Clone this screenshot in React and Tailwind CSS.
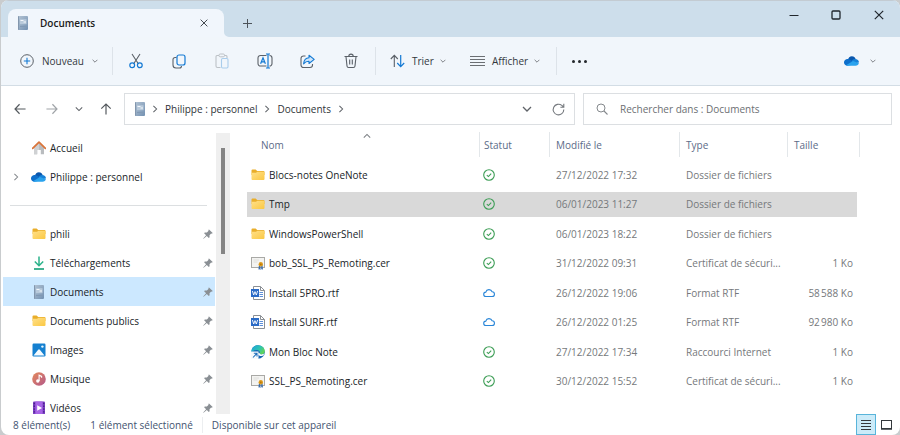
import React from "react";

/* ---------- generic glyphs ---------- */

function Chevron({ dir = "down", size = 8, className = "text-[#5f6368]" }) {
  const paths = {
    down: "M1 3 L5 7 L9 3",
    up: "M1 7 L5 3 L9 7",
    right: "M3 1 L7 5 L3 9",
  };
  return (
    <svg width={size} height={size} viewBox="0 0 10 10" fill="none" className={`shrink-0 ${className}`} aria-hidden="true">
      <path d={paths[dir]} stroke="currentColor" strokeWidth="1.3" />
    </svg>
  );
}

function Arrow({ dir, className }) {
  const paths = {
    left: "M13.5 7 H1.5 M6.5 1.5 L1.2 7 L6.5 12.5",
    right: "M0.5 7 H12.5 M7.5 1.5 L12.8 7 L7.5 12.5",
    up: "M7 13.5 V1.5 M1.5 6.5 L7 1.2 L12.5 6.5",
  };
  return (
    <svg width="12" height="12" viewBox="0 0 14 14" fill="none" className={className} aria-hidden="true">
      <path d={paths[dir]} stroke="currentColor" strokeWidth="1.4" />
    </svg>
  );
}

function CloseGlyph({ size = 8, className }) {
  return (
    <svg width={size} height={size} viewBox="0 0 10 10" fill="none" className={className} aria-hidden="true">
      <path d="M0.8 0.8 L9.2 9.2 M9.2 0.8 L0.8 9.2" stroke="currentColor" strokeWidth="1.2" />
    </svg>
  );
}

/* ---------- toolbar icons ---------- */

function NewIcon() {
  return (
    <svg width="14" height="14" viewBox="0 0 14 14" fill="none" aria-hidden="true">
      <circle cx="7" cy="7" r="6.3" stroke="#5b6168" />
      <path d="M7 3.8 V10.2 M3.8 7 H10.2" stroke="#1379d3" strokeWidth="1.1" />
    </svg>
  );
}

function CutIcon() {
  return (
    <svg width="14" height="16" viewBox="0 0 14 16" fill="none" aria-hidden="true">
      <path d="M3 1 L9.3 10.8 M11 1 L4.7 10.8" stroke="#5b6168" strokeWidth="1.1" />
      <circle cx="3.2" cy="12.3" r="2.4" stroke="#1379d3" strokeWidth="1.2" />
      <circle cx="10.8" cy="12.3" r="2.4" stroke="#1379d3" strokeWidth="1.2" />
    </svg>
  );
}

function CopyIcon() {
  return (
    <svg width="14" height="15" viewBox="0 0 14 15" fill="none" aria-hidden="true">
      <path d="M4.5 3.5 H3 a2 2 0 0 0 -2 2 V11 a3 3 0 0 0 3 3 H7.5 a2 2 0 0 0 2 -2" stroke="#5b6168" strokeWidth="1.1" />
      <rect x="5" y="1" width="8" height="10" rx="2" stroke="#1379d3" strokeWidth="1.2" />
    </svg>
  );
}

function PasteIcon() {
  return (
    <svg width="14" height="16" viewBox="0 0 14 16" fill="none" aria-hidden="true">
      <path d="M4 2.5 H2 a1 1 0 0 0 -1 1 V13 a1.5 1.5 0 0 0 1.5 1.5 H5.5 M9.5 2.5 H11 a1 1 0 0 1 1 1 V5" stroke="#bcc1c6" strokeWidth="1.1" />
      <rect x="4" y="1" width="5.5" height="2.8" rx="1.2" stroke="#bcc1c6" />
      <rect x="6.5" y="5.5" width="6.5" height="9.5" rx="1.2" stroke="#a9cdec" strokeWidth="1.1" />
    </svg>
  );
}

function RenameIcon() {
  return (
    <svg width="16" height="16" viewBox="0 0 16 16" fill="none" aria-hidden="true">
      <path d="M9.5 2.5 H3.5 a2.5 2.5 0 0 0 -2.5 2.5 V10.5 a2.5 2.5 0 0 0 2.5 2.5 H9.5 M12.5 2.5 a2.5 2.5 0 0 1 2.5 2.5 V10.5 a2.5 2.5 0 0 1 -2.5 2.5" stroke="#5b6168" strokeWidth="1.1" />
      <path d="M3.6 10.8 L6 4.8 L8.4 10.8 M4.5 8.8 H7.5" stroke="#1379d3" strokeWidth="1.2" />
      <path d="M9 1 H13 M11 1 V15 M9 15 H13" stroke="#1379d3" strokeWidth="1.2" />
    </svg>
  );
}

function ShareIcon() {
  return (
    <svg width="15" height="15" viewBox="0 0 15 15" fill="none" aria-hidden="true">
      <path d="M5.5 2 H3.5 a2.5 2.5 0 0 0 -2.5 2.5 V11 a2.5 2.5 0 0 0 2.5 2.5 H10 a2.5 2.5 0 0 0 2.5 -2.5 V10" stroke="#5b6168" strokeWidth="1.1" />
      <path d="M9 1.3 L14.2 5.4 L9 9.5 V7.2 C6.5 7.1 5 8 3.6 9.8 C3.9 6.3 5.8 3.9 9 3.7 Z" fill="#cfe6fa" stroke="#1379d3" strokeWidth="1.1" strokeLinejoin="round" />
    </svg>
  );
}

function TrashIcon() {
  return (
    <svg width="14" height="16" viewBox="0 0 14 16" fill="none" aria-hidden="true">
      <path d="M0.5 3.5 H13.5 M4.8 3.3 a2.2 2.2 0 0 1 4.4 0 M2 3.8 L3 13 a1.6 1.6 0 0 0 1.6 1.5 H9.4 a1.6 1.6 0 0 0 1.6 -1.5 L12 3.8 M5.7 6.5 V11.5 M8.3 6.5 V11.5" stroke="#5b6168" strokeWidth="1.1" />
    </svg>
  );
}

function SortIcon() {
  return (
    <svg width="15" height="14" viewBox="0 0 15 14" fill="none" aria-hidden="true">
      <path d="M4.3 13 V1.5 M0.8 5 L4.3 1.3 L7.8 5" stroke="#5b6168" strokeWidth="1.1" />
      <path d="M10.7 1 V12.5 M7.2 9 L10.7 12.7 L14.2 9" stroke="#1379d3" strokeWidth="1.2" />
    </svg>
  );
}

function LinesIcon() {
  return (
    <svg width="15" height="10" viewBox="0 0 15 10" fill="none" aria-hidden="true">
      <path d="M0 0.5 H15 M0 3.5 H15 M0 6.5 H15 M0 9.5 H15" stroke="#6b6f73" />
    </svg>
  );
}

function OneDriveIcon() {
  return (
    <svg width="15" height="10" viewBox="0 0 15 10" className="shrink-0" aria-hidden="true">
      <path d="M4 4 C4.2 1.8 5.8 0.3 7.9 0.3 C9.8 0.3 11.2 1.5 11.7 3.2 L8 6 Z" fill="#0a57ad" />
      <path d="M3.5 9.7 C1.5 9.7 0 8.3 0 6.4 C0 4.5 1.6 3 3.6 3 C5 3 6 3.6 7 4.3 L12 8 Z" fill="#0e6fcb" />
      <path d="M7.5 5.2 C8.4 3.7 9.6 3 11 3 C13.3 3 15 4.4 15 6.4 L10 7.5 Z" fill="#1681d8" />
      <path d="M2 9.2 L9 4.9 L14.9 7.3 C14.5 8.8 13.3 9.7 11.6 9.7 H3.5 Z" fill="#2aa3ee" />
    </svg>
  );
}

/* ---------- item icons ---------- */

function CabinetIcon() {
  return (
    <svg width="14" height="14" viewBox="0 0 14 14" className="shrink-0" aria-hidden="true">
      <defs>
        <linearGradient id="cabinet" x1="0" y1="0" x2="1" y2="1">
          <stop offset="0" stopColor="#b3c3d3" />
          <stop offset="1" stopColor="#7391b2" />
        </linearGradient>
      </defs>
      <rect x="2" y="0" width="10" height="14" rx="1" fill="url(#cabinet)" />
      <path d="M2 1 a1 1 0 0 1 1 -1 V14 a1 1 0 0 1 -1 -1 Z" fill="#8296ad" />
      <rect x="4" y="3.2" width="6.5" height="5" fill="#b9cadb" />
      <path d="M4.5 4.5 H7.5 M7.5 6 H10" stroke="#f3f7fb" strokeWidth="1.1" />
      <path d="M4 10.5 H11" stroke="#8199b4" />
    </svg>
  );
}

function FolderIcon() {
  return (
    <svg width="14" height="12" viewBox="0 0 14 12" className="shrink-0" aria-hidden="true">
      <defs>
        <linearGradient id="folder" x1="0" y1="0" x2="1" y2="1">
          <stop offset="0" stopColor="#ffe08a" />
          <stop offset="1" stopColor="#fbc843" />
        </linearGradient>
      </defs>
      <path d="M0.5 1.6 a1 1 0 0 1 1 -1 H4.6 L6.2 2 H12.5 a1 1 0 0 1 1 1 V6 H0.5 Z" fill="#e9ae2b" />
      <path d="M0.5 3.8 H5 L6.4 2.8 H12.6 a0.9 0.9 0 0 1 0.9 0.9 V10 a1 1 0 0 1 -1 1 H1.5 a1 1 0 0 1 -1 -1 Z" fill="url(#folder)" />
    </svg>
  );
}

function HomeIcon() {
  return (
    <svg width="14" height="14" viewBox="0 0 14 14" className="shrink-0" aria-hidden="true">
      <path d="M2 6.5 L7 2 L12 6.5 V13.2 H8.8 V9 H5.2 V13.2 H2 Z" fill="#b9bcbf" />
      <path d="M2 6.5 L7 2 V9 H5.2 V13.2 H2 Z" fill="#cfd1d3" />
      <path d="M0.6 7.4 L7 1.2 L13.4 7.4" fill="none" stroke="#d9743a" strokeWidth="1.8" strokeLinejoin="round" strokeLinecap="round" />
    </svg>
  );
}

function DownloadIcon() {
  return (
    <svg width="14" height="14" viewBox="0 0 14 14" fill="none" className="shrink-0" aria-hidden="true">
      <path d="M7 0.5 V9.5 M2.8 5.5 L7 9.7 L11.2 5.5" stroke="#2bb38a" strokeWidth="1.5" />
      <path d="M2 13 H12" stroke="#159f77" strokeWidth="1.6" />
    </svg>
  );
}

function PicturesIcon() {
  return (
    <svg width="14" height="14" viewBox="0 0 14 14" className="shrink-0" aria-hidden="true">
      <rect x="0.5" y="0.5" width="13" height="13" rx="1.2" fill="#1580d0" />
      <path d="M1.5 12.5 L6.2 6.8 a1 1 0 0 1 1.6 0 L12.5 12.5 Z" fill="#f5fbff" />
      <circle cx="10.4" cy="3.6" r="1.2" fill="#e6f4ff" />
    </svg>
  );
}

function MusicIcon() {
  return (
    <svg width="14" height="14" viewBox="0 0 14 14" className="shrink-0" aria-hidden="true">
      <defs>
        <linearGradient id="music" x1="0" y1="0" x2="1" y2="1">
          <stop offset="0" stopColor="#e58a5a" />
          <stop offset="1" stopColor="#b3588a" />
        </linearGradient>
      </defs>
      <circle cx="7" cy="7" r="6.8" fill="url(#music)" />
      <circle cx="5.8" cy="9" r="1.7" fill="#fff" />
      <path d="M7.1 9 V3.2 L9.6 4.4 V5.8" fill="none" stroke="#fff" strokeWidth="1.1" />
    </svg>
  );
}

function VideoIcon() {
  return (
    <svg width="14" height="14" viewBox="0 0 14 14" className="shrink-0" aria-hidden="true">
      <rect x="1" y="0.5" width="12" height="13" rx="1" fill="#7b3fc4" />
      <rect x="3.4" y="0.5" width="7.2" height="13" fill="#a764e6" />
      <path d="M2.2 1.8 V13 M11.8 1.8 V13" stroke="#3c1a74" strokeWidth="1.1" strokeDasharray="1.4 1.4" />
      <path d="M5.2 4.2 L10 7 L5.2 9.8 Z" fill="#fff" />
    </svg>
  );
}

function PinIcon() {
  return (
    <svg width="10" height="10" viewBox="0 0 10 10" className="shrink-0" aria-label="Épinglé" role="img">
      <path d="M6 0.4 L9.7 4 L8.9 4.7 L8.2 4.5 L6.5 6.2 L6.6 8.2 L5.8 8.9 L3.8 6.9 L0.6 9.8 L0.2 9.4 L3.1 6.2 L1.1 4.2 L1.8 3.5 L3.9 3.6 L5.6 1.8 L5.3 1.1 Z" fill="#8a8f94" />
    </svg>
  );
}

function CertIcon() {
  return (
    <svg width="14" height="14" viewBox="0 0 14 14" className="shrink-0" aria-hidden="true">
      <rect x="0.5" y="1.5" width="13" height="10" fill="#f3f3f1" stroke="#a9a9a6" />
      <path d="M2.5 4 H8 M2.5 6 H6.5" stroke="#dededb" />
      <path d="M8 9 H9.5 V14 L8.3 13.2 L7.4 13.6 Z M10.2 9 H11.4 L12 13.6 L10.2 13.2 Z" fill="#3b6cab" />
      <circle cx="9.8" cy="8.3" r="2.2" fill="#dd9a1c" />
      <circle cx="9.8" cy="8.3" r="0.9" fill="#b97708" />
    </svg>
  );
}

function WordIcon() {
  return (
    <svg width="14" height="14" viewBox="0 0 14 14" className="shrink-0" aria-hidden="true">
      <path d="M2.5 0.5 H9.5 L13.5 4.5 V13.5 H2.5 Z" fill="#fff" stroke="#8b8f94" />
      <path d="M9.5 0.5 V4.5 H13.5" fill="none" stroke="#8b8f94" />
      <path d="M8.5 6.5 H12 M8.5 8.5 H12 M8.5 10.5 H12" stroke="#5f90da" />
      <rect x="0" y="3" width="8" height="8" fill="#2b6bc6" />
      <path d="M1.4 5 L2.7 9 L4 5.6 L5.3 9 L6.6 5" fill="none" stroke="#fff" strokeWidth="0.9" />
    </svg>
  );
}

function EdgeShortcutIcon() {
  return (
    <svg width="14" height="14" viewBox="0 0 14 14" className="shrink-0" aria-hidden="true">
      <defs>
        <linearGradient id="edge" x1="0" y1="0" x2="1" y2="0.5">
          <stop offset="0" stopColor="#1f9fdb" />
          <stop offset="0.6" stopColor="#2cc3b4" />
          <stop offset="1" stopColor="#5fd35a" />
        </linearGradient>
      </defs>
      <circle cx="7" cy="7" r="6.8" fill="#1465b5" />
      <path d="M0.3 6.5 C0.5 2.8 3.5 0.2 7 0.2 C11 0.2 13.8 3.1 13.8 6.2 C13.8 8.2 12.3 9.4 10.5 9.4 C8.8 9.4 8.2 8.6 8.8 7.8 C9.3 6.6 8 5 5.8 5 C3.5 5 1.2 6 0.3 8 Z" fill="url(#edge)" />
      <path d="M8.8 7.8 C8.2 8.6 8.8 9.4 10.5 9.4 C11.8 9.4 12.8 9 13.3 8.2 L12.6 10.6 C10.5 11.6 7.5 11.2 7 8.5 Z" fill="#fff" />
      <rect x="0" y="6.5" width="7.5" height="7.5" fill="#f7fafc" />
      <path d="M2 12.5 L5.6 8.6 M2.8 8.2 H6 V11.4" fill="none" stroke="#2170bd" strokeWidth="1.1" />
    </svg>
  );
}

function SyncedIcon() {
  return (
    <svg width="12" height="12" viewBox="0 0 12 12" fill="none" role="img" aria-label="Disponible sur cet appareil">
      <circle cx="6" cy="6" r="5.3" stroke="#3c9d55" strokeWidth="1.1" />
      <path d="M3.8 6.2 L5.4 7.6 L8.2 4.7" stroke="#3c9d55" strokeWidth="1.1" />
    </svg>
  );
}

function CloudIcon() {
  return (
    <svg width="12" height="12" viewBox="0 0 12 12" fill="none" role="img" aria-label="Disponible en ligne">
      <path d="M3 9.5 a2.2 2.2 0 0 1 -0.2 -4.4 a3.3 3.3 0 0 1 6.3 -0.3 a2.35 2.35 0 0 1 0 4.7 Z" stroke="#2a86d8" strokeWidth="1.1" />
    </svg>
  );
}

/* ---------- data ---------- */

const places = [
  { label: "phili", Icon: FolderIcon },
  { label: "Téléchargements", Icon: DownloadIcon },
  { label: "Documents", Icon: CabinetIcon, selected: true },
  { label: "Documents publics", Icon: FolderIcon },
  { label: "Images", Icon: PicturesIcon },
  { label: "Musique", Icon: MusicIcon },
  { label: "Vidéos", Icon: VideoIcon },
];

const files = [
  { name: "Blocs-notes OneNote", Icon: FolderIcon, Status: SyncedIcon, date: "27/12/2022 17:32", type: "Dossier de fichiers", size: "" },
  { name: "Tmp", Icon: FolderIcon, Status: SyncedIcon, date: "06/01/2023 11:27", type: "Dossier de fichiers", size: "", selected: true },
  { name: "WindowsPowerShell", Icon: FolderIcon, Status: SyncedIcon, date: "06/01/2023 18:22", type: "Dossier de fichiers", size: "" },
  { name: "bob_SSL_PS_Remoting.cer", Icon: CertIcon, Status: SyncedIcon, date: "31/12/2022 09:31", type: "Certificat de sécuri...", size: "1 Ko" },
  { name: "Install 5PRO.rtf", Icon: WordIcon, Status: CloudIcon, date: "26/12/2022 19:06", type: "Format RTF", size: "58\u202f588 Ko" },
  { name: "Install SURF.rtf", Icon: WordIcon, Status: CloudIcon, date: "26/12/2022 01:25", type: "Format RTF", size: "92\u202f980 Ko" },
  { name: "Mon Bloc Note", Icon: EdgeShortcutIcon, Status: SyncedIcon, date: "27/12/2022 17:34", type: "Raccourci Internet", size: "1 Ko" },
  { name: "SSL_PS_Remoting.cer", Icon: CertIcon, Status: SyncedIcon, date: "30/12/2022 15:52", type: "Certificat de sécuri...", size: "1 Ko" },
];

/* ---------- sections ---------- */

function TitleBar() {
  return (
    <header className="flex h-[37px] shrink-0 border-t border-[#c3cbd2] bg-[#cddeeb] pl-[7px]">
      <div className="relative mt-2 flex w-[216px] items-center rounded-t-lg bg-[#f1f6fc] pr-3 pl-2 text-[#1b1b1b]">
        <CabinetIcon />
        <h1 className="ml-[10px] flex-1 font-semibold">Documents</h1>
        <button type="button" aria-label="Fermer l'onglet" className="grid size-4 place-items-center">
          <CloseGlyph className="text-[#3c4248]" />
        </button>
        <svg width="5" height="5" viewBox="0 0 5 5" className="absolute bottom-0 left-full" aria-hidden="true">
          <path d="M0 0 A5 5 0 0 0 5 5 H0 Z" fill="#f1f6fc" />
        </svg>
      </div>
      <button type="button" aria-label="Nouvel onglet" className="mt-2 ml-[11px] grid w-6 place-items-center text-[#4c535a]">
        <svg width="9" height="9" viewBox="0 0 9 9" fill="none" aria-hidden="true">
          <path d="M4.5 0 V9 M0 4.5 H9" stroke="currentColor" />
        </svg>
      </button>
      <div className="ml-auto flex h-[27px] text-[#20262c]">
        <button type="button" aria-label="Réduire" className="grid w-[42px] place-items-center">
          <svg width="10" height="10" viewBox="0 0 10 10" aria-hidden="true"><path d="M0.5 5.5 H9.5" stroke="currentColor" /></svg>
        </button>
        <button type="button" aria-label="Agrandir" className="grid w-[42px] place-items-center">
          <svg width="10" height="10" viewBox="0 0 10 10" aria-hidden="true"><rect x="1" y="1" width="8" height="8" rx="1" fill="none" stroke="currentColor" strokeWidth="1.3" /></svg>
        </button>
        <button type="button" aria-label="Fermer" className="grid w-[43px] place-items-center">
          <CloseGlyph size={10} />
        </button>
      </div>
    </header>
  );
}

function ToolButton({ label, children }) {
  return (
    <button type="button" aria-label={label} className="grid h-8 w-[43px] place-items-center">
      {children}
    </button>
  );
}

function Divider() {
  return <div className="h-7 w-px shrink-0 bg-[#dde3e9]" />;
}

function Toolbar() {
  return (
    <div role="toolbar" aria-label="Commandes" className="flex h-[49px] shrink-0 items-center border-b border-[#d3dde5] bg-[#f1f6fb] text-[#33383d]">
      <button type="button" className="flex w-[111px] items-center pl-[19px]">
        <NewIcon />
        <span className="mr-2 ml-2">Nouveau</span>
        <Chevron size={6} />
      </button>
      <Divider />
      <div className="flex w-[262px] pl-px">
        <ToolButton label="Couper"><CutIcon /></ToolButton>
        <ToolButton label="Copier"><CopyIcon /></ToolButton>
        <ToolButton label="Coller"><PasteIcon /></ToolButton>
        <ToolButton label="Renommer"><RenameIcon /></ToolButton>
        <ToolButton label="Partager"><ShareIcon /></ToolButton>
        <ToolButton label="Supprimer"><TrashIcon /></ToolButton>
      </div>
      <Divider />
      <button type="button" className="flex w-[80px] items-center pl-[14px]">
        <SortIcon />
        <span className="mr-[6px] ml-[7px]">Trier</span>
        <Chevron size={6} />
      </button>
      <button type="button" className="flex w-[100px] items-center pl-[14px]">
        <LinesIcon />
        <span className="mr-[6px] ml-[7px]">Afficher</span>
        <Chevron size={6} />
      </button>
      <Divider />
      <button type="button" aria-label="Voir plus" className="grid w-[44px] place-items-center">
        <svg width="15" height="3" viewBox="0 0 15 3" aria-hidden="true">
          <circle cx="1.5" cy="1.5" r="1.5" fill="#24282c" />
          <circle cx="7.5" cy="1.5" r="1.5" fill="#24282c" />
          <circle cx="13.5" cy="1.5" r="1.5" fill="#24282c" />
        </svg>
      </button>
      <button type="button" aria-label="OneDrive" className="mr-6 ml-auto flex items-center gap-[11px]">
        <OneDriveIcon />
        <Chevron size={6} />
      </button>
    </div>
  );
}

function AddressRow() {
  return (
    <div className="flex h-[46px] shrink-0 items-center pr-2 pl-[6px]">
      <div className="flex w-[117px] items-center">
        <button type="button" aria-label="Précédent" className="grid w-[26px] place-items-center"><Arrow dir="left" className="text-[#555a5f]" /></button>
        <button type="button" aria-label="Suivant" className="ml-[6px] grid w-[26px] place-items-center"><Arrow dir="right" className="text-[#a0a4a8]" /></button>
        <button type="button" aria-label="Emplacements récents" className="grid w-[28px] place-items-center"><Chevron /></button>
        <button type="button" aria-label="Remonter" className="grid w-[26px] place-items-center"><Arrow dir="up" className="text-[#555a5f]" /></button>
      </div>
      <div className="flex h-8 flex-1 items-center border border-[#dcdfe2] pl-2 text-[#303438]">
        <CabinetIcon />
        <nav aria-label="Chemin" className="ml-1 flex items-center gap-[6px]">
          <Chevron dir="right" />
          <a href="#personnel">Philippe : personnel</a>
          <Chevron dir="right" />
          <a href="#documents">Documents</a>
          <Chevron dir="right" />
        </nav>
        <button type="button" aria-label="Historique" className="ml-auto grid w-[30px] place-items-center"><Chevron size={10} /></button>
        <button type="button" aria-label="Actualiser" className="grid w-8 place-items-center">
          <svg width="13" height="13" viewBox="0 0 13 13" fill="none" aria-hidden="true">
            <path d="M11.8 6.5 A5.3 5.3 0 1 1 9.8 2.4 L11.6 4 M11.8 0.8 V4.2 H8.4" stroke="#75797e" strokeWidth="1.1" />
          </svg>
        </button>
      </div>
      <label className="ml-2 flex h-8 w-[309px] items-center border border-[#dcdfe2] pl-3">
        <svg width="12" height="12" viewBox="0 0 12 12" fill="none" className="shrink-0" aria-hidden="true">
          <circle cx="5" cy="5" r="4" stroke="#85898d" />
          <path d="M8 8 L11.5 11.5" stroke="#85898d" strokeWidth="1.1" />
        </svg>
        <input
          type="search"
          aria-label="Rechercher dans : Documents"
          placeholder="Rechercher dans : Documents"
          className="ml-3 min-w-0 flex-1 bg-transparent outline-none placeholder:text-[#6c6f73]"
        />
      </label>
    </div>
  );
}

function Sidebar() {
  return (
    <aside className="flex w-[229px] shrink-0 pt-px">
      <nav aria-label="Volet de navigation" className="w-[215px] overflow-hidden pr-px pl-[2px] text-[#202428]">
        <a href="#accueil" className="flex h-[29px] items-center gap-1 pl-[29px]">
          <HomeIcon />
          Accueil
        </a>
        <a href="#personnel" className="flex h-[29px] items-center gap-1 pl-[9px]">
          <Chevron dir="right" className="mr-[7px] text-[#85898d]" />
          <OneDriveIcon />
          Philippe : personnel
        </a>
        <div className="flex h-7 items-center pr-2 pl-[7px]">
          <hr className="w-full border-[#dcdfe1]" />
        </div>
        {places.map(({ label, Icon, selected }) => (
          <a
            key={label}
            href={"#" + label}
            className={`flex h-[29px] items-center gap-1 pr-[2px] pl-[29px] ${selected ? "bg-[#cce8ff]" : ""}`}
          >
            <Icon />
            <span className="flex-1">{label}</span>
            <PinIcon />
          </a>
        ))}
      </nav>
      <div className="w-[14px] bg-[#efefef] pt-[15px]">
        <div className="mx-auto h-[106px] w-1 bg-[#858585]" />
      </div>
    </aside>
  );
}

function HeaderCell({ children, className }) {
  return (
    <th scope="col" className="p-0 text-left font-normal">
      <button type="button" className={`flex h-[25px] w-full items-center border-r border-[#e3e7ea] text-left ${className}`}>
        {children}
      </button>
    </th>
  );
}

function Cell({ selected, children, className }) {
  return (
    <td className="p-0">
      <div className={`flex h-[25px] items-center whitespace-nowrap ${selected ? "bg-[#d9d9d9]" : ""} ${className}`}>
        {children}
      </div>
    </td>
  );
}

function FileList() {
  return (
    <div className="min-w-0 flex-1 pr-10 pl-[17px]">
      <table className="w-full table-fixed border-collapse">
        <colgroup>
          <col />
          <col className="w-[70px]" />
          <col className="w-[130px]" />
          <col className="w-[108px]" />
          <col className="w-[72px]" />
        </colgroup>
        <thead className="text-[#5c6b88]">
          <tr>
            <HeaderCell className="relative pl-[14px]">
              Nom
              <span className="absolute top-0 left-1/2 flex"><Chevron dir="up" className="text-[#7b7f83]" /></span>
            </HeaderCell>
            <HeaderCell className="pl-1">Statut</HeaderCell>
            <HeaderCell className="pl-[6px]">Modifié le</HeaderCell>
            <HeaderCell className="pl-[6px]">Type</HeaderCell>
            <HeaderCell className="pl-[6px]">Taille</HeaderCell>
          </tr>
          <tr aria-hidden="true"><td colSpan={5} className="h-[3px] p-0" /></tr>
        </thead>
        <tbody className="text-[#75787b]">
          {files.map(({ name, Icon, Status, date, type, size, selected }) => (
            <tr key={name} aria-selected={!!selected} className="h-[29px] even:h-[30px]">
              <Cell selected={selected} className="gap-1 pl-1 text-[#202428]">
                <Icon />
                {name}
              </Cell>
              <Cell selected={selected} className="pl-[3px]"><Status /></Cell>
              <Cell selected={selected} className="pl-[6px]">{date}</Cell>
              <Cell selected={selected} className="pl-[6px]">{type}</Cell>
              <Cell selected={selected} className="mr-[3px] justify-end pr-1">{size}</Cell>
            </tr>
          ))}
        </tbody>
      </table>
    </div>
  );
}

function StatusBar() {
  return (
    <footer className="flex h-[21px] shrink-0 items-center pl-3 text-[#43536f]">
      <span>8 élément(s)</span>
      <span className="ml-5">1 élément sélectionné</span>
      <span className="ml-[9px] border-l border-[#eceef0] pl-[9px]">Disponible sur cet appareil</span>
      <div className="ml-auto flex items-center pr-1">
        <button type="button" aria-label="Détails" aria-pressed="true" className="grid h-[21px] w-5 place-items-center border border-[#58b4da] bg-[#cbebf9]">
          <svg width="10" height="10" viewBox="0 0 10 10" aria-hidden="true">
            <path d="M0 0.5 H10 M0 3.5 H10 M0 6.5 H10 M0 9.5 H10" stroke="#33383c" />
          </svg>
        </button>
        <button type="button" aria-label="Grandes icônes" className="grid h-[21px] w-5 place-items-center">
          <svg width="11" height="10" viewBox="0 0 11 10" aria-hidden="true">
            <rect x="0.5" y="0.5" width="10" height="8" fill="#fff" stroke="#33383c" />
            <path d="M0 9 H11" stroke="#33383c" strokeWidth="1.6" />
          </svg>
        </button>
      </div>
    </footer>
  );
}

export default function App() {
  return (
    <div className="h-screen bg-[#c9ccce] pl-px font-['Open_Sans','Noto_Sans',sans-serif] text-[10px] leading-4">
      <div className="flex h-full flex-col overflow-hidden rounded-lg bg-white">
        <TitleBar />
        <Toolbar />
        <AddressRow />
        <main className="flex min-h-0 flex-1 overflow-hidden">
          <Sidebar />
          <FileList />
        </main>
        <StatusBar />
      </div>
    </div>
  );
}
